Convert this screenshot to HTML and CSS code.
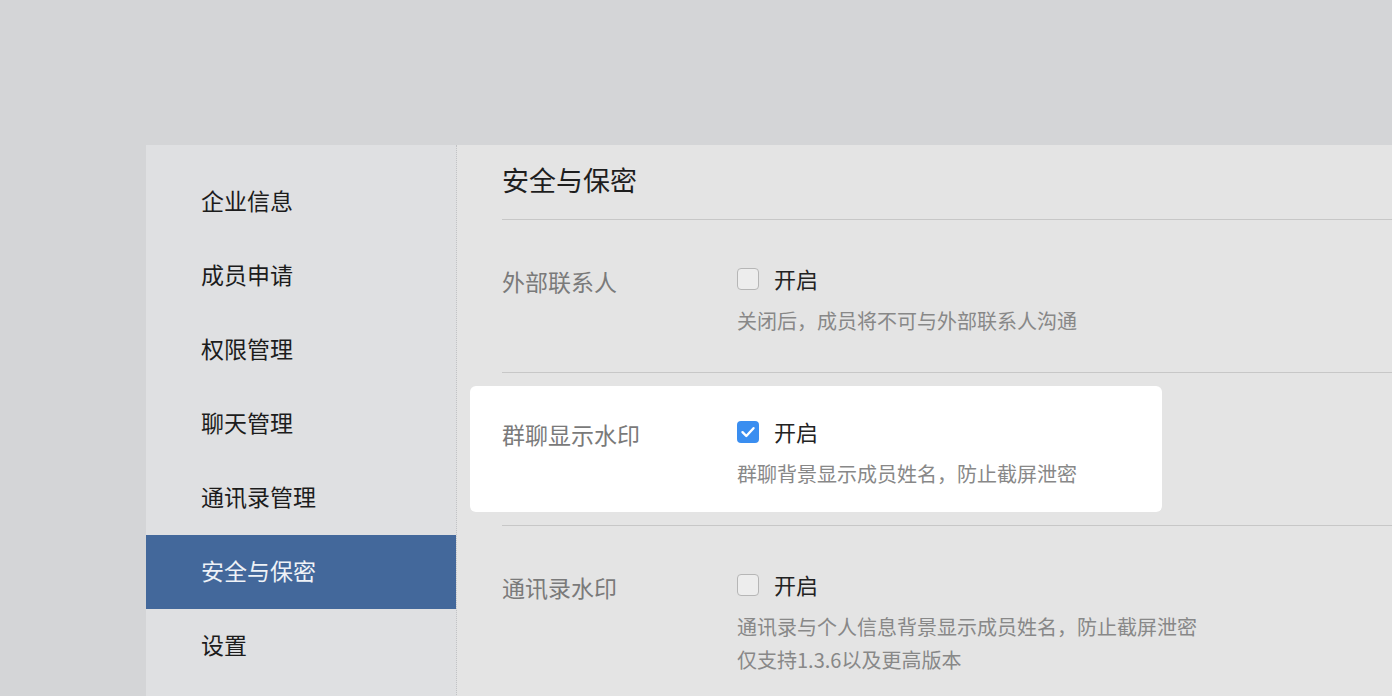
FILE: index.html
```html
<!DOCTYPE html>
<html lang="zh-CN">
<head>
<meta charset="utf-8">
<title>安全与保密</title>
<link rel="stylesheet" href="styles.css">
</head>
<body>
<div class="page">
  <div class="panel">
    <nav class="sidebar">
      <div class="nav-item">企业信息</div>
      <div class="nav-item">成员申请</div>
      <div class="nav-item">权限管理</div>
      <div class="nav-item">聊天管理</div>
      <div class="nav-item">通讯录管理</div>
      <div class="nav-item active">安全与保密</div>
      <div class="nav-item">设置</div>
    </nav>
    <main class="content">
      <div class="title">安全与保密</div>
      <section class="row">
        <div class="label">外部联系人</div>
        <div class="control">
          <label class="option"><span class="box"></span><span class="opt-text">开启</span></label>
          <div class="desc">关闭后，成员将不可与外部联系人沟通</div>
        </div>
      </section>
      <section class="row-wrap">
        <div class="card">
          <div class="label">群聊显示水印</div>
          <div class="control">
            <label class="option"><span class="box checked"><svg viewBox="0 0 22 22" width="22" height="22"><path d="M5.5 11.2 L9.3 15 L16.5 7.2" fill="none" stroke="#fff" stroke-width="2.4" stroke-linecap="round" stroke-linejoin="round"/></svg></span><span class="opt-text">开启</span></label>
            <div class="desc">群聊背景显示成员姓名，防止截屏泄密</div>
          </div>
        </div>
      </section>
      <section class="row">
        <div class="label">通讯录水印</div>
        <div class="control">
          <label class="option"><span class="box"></span><span class="opt-text">开启</span></label>
          <div class="desc">通讯录与个人信息背景显示成员姓名，防止截屏泄密<br>仅支持1.3.6以及更高版本</div>
        </div>
      </section>
    </main>
  </div>
</div>
</body>
</html>
```

FILE: styles.css
```css
* { box-sizing: border-box; }
html, body {
  margin: 0;
  padding: 0;
  background: #d4d5d7;
  overflow: hidden;
  height: 696px;
}
body {
  font-family: "Noto Sans CJK SC", "Noto Sans", sans-serif;
}
.page {
  padding: 145px 0 0 146px;
  width: 1392px;
}
.panel {
  display: flex;
  height: 700px;
  width: 1246px;
}
.sidebar {
  width: 311px;
  flex: none;
  background: #dfe0e2;
  border-right: 1px dotted #c2c3c5;
  padding-top: 20px;
}
.nav-item {
  height: 74px;
  line-height: 70px;
  padding-bottom: 4px;
  padding-left: 55px;
  font-size: 23px;
  color: #1c1c1c;
}
.nav-item.active {
  background: #43689b;
  color: #eef2f7;
}
.content {
  flex: 1;
  background: #e4e4e4;
  padding-left: 45px;
  overflow: hidden;
}
.title {
  height: 75px;
  line-height: 70px;
  padding-bottom: 4px;
  font-size: 27px;
  color: #1e1e1e;
  border-bottom: 1px solid #c7c7c7;
}
.row {
  display: flex;
  padding: 48px 0 35px;
  border-bottom: 1px solid #c7c7c7;
}
.row-wrap {
  padding: 13px 0;
  border-bottom: 1px solid #c7c7c7;
}
.card {
  display: flex;
  width: 692px;
  margin-left: -32px;
  padding: 35px 0 22px 32px;
  background: #ffffff;
  border-radius: 6px;
}
.label {
  width: 235px;
  flex: none;
  padding-top: 2px;
  font-size: 23px;
  line-height: 22px;
  color: #7a7a7a;
}
.control {
  display: flex;
  flex-direction: column;
}
.option {
  display: flex;
  align-items: center;
  height: 22px;
}
.box {
  width: 22px;
  height: 22px;
  border: 1.5px solid #b6b6b6;
  border-radius: 4px;
  background: #ededed;
  flex: none;
  display: block;
}
.box.checked {
  border: none;
  background: #3a8ef0;
}
.box svg { display: block; }
.opt-text {
  margin-left: 15px;
  margin-top: -2px;
  font-size: 22px;
  line-height: 22px;
  color: #222222;
}
.desc {
  margin-top: 14px;
  font-size: 20px;
  line-height: 33px;
  color: #888888;
}
```
